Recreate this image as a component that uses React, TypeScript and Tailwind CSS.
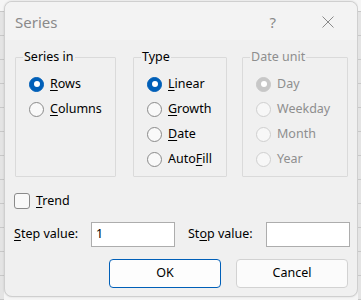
import React from 'react';

const font = "font-['Segoe_UI','Noto_Sans','Open_Sans',sans-serif]";

function Radio({ label, u, checked = false, disabled = false }: { label: string; u: number; checked?: boolean; disabled?: boolean }) {
  const circle = disabled
    ? checked
      ? 'bg-[#c7c7c7] border-[#c7c7c7]'
      : 'bg-[#f7f7f7] border-[#cfcfcf]'
    : checked
      ? 'bg-[#005fb8] border-[#005fb8]'
      : 'bg-[#f9f9f9] border-[#8a8a8a]';
  return (
    <div className="flex items-center h-[25px]">
      <span className={`w-[15px] h-[15px] rounded-full border flex items-center justify-center ${circle}`}>
        {checked && <span className="w-[6px] h-[6px] rounded-full bg-white" />}
      </span>
      <span className={`ml-[6px] ${disabled ? 'text-[#8e8e8e]' : 'text-black'}`}>
        {disabled ? (
          label
        ) : (
          <>
            {label.slice(0, u)}
            <span className="underline underline-offset-2">{label[u]}</span>
            {label.slice(u + 1)}
          </>
        )}
      </span>
    </div>
  );
}

function Group({ title, width, disabled = false, children }: { title: string; width: string; disabled?: boolean; children: React.ReactNode }) {
  return (
    <fieldset className={`${width} h-[129px] border border-[#dadada] rounded-[1px] pl-[13px] pt-[5px]`}>
      <legend className={`ml-[-6px] px-[1px] ${disabled ? 'text-[#8e8e8e]' : 'text-black'}`}>{title}</legend>
      {children}
    </fieldset>
  );
}

function GridStrip({ width }: { width: string }) {
  const rows = [25, 24, 24, 24, 24, 24, 24, 24, 24, 24, 24, 24];
  return (
    <div className={`${width} flex flex-col bg-[#e4e4e4]`}>
      <div className="h-[24px] bg-[#f5f5f5] border-b border-[#c8c8c8]" />
      {rows.map((h, i) => (
        <div key={i} className="h-[24px] shrink-0 border-b border-[#c8c8c8]" />
      ))}
    </div>
  );
}

export default function App() {
  return (
    <div className={`w-[361px] h-[300px] flex overflow-hidden bg-[#f5f5f5] text-[12.5px] ${font}`}>
      <GridStrip width="w-[4px]" />
      <div className="w-[354px] h-[296px] mt-[1px] flex flex-col bg-[#f0f0f0] border border-[#cfcfcf] rounded-[8px] shadow-[0_0_2px_rgba(0,0,0,0.15)] overflow-hidden">
        <div className="h-[38px] shrink-0 flex items-center bg-[#f3f3f3] pl-[10px]">
          <span className="text-[15px] text-[#8a8a8a] mt-[2px]">Series</span>
          <span className="ml-auto mr-[46px] text-[15px] text-[#8a8a8a] mt-[2px]">?</span>
          <svg width="12" height="12" viewBox="0 0 12 12" className="mr-[23px] mt-[2px]">
            <path d="M0.5 0.5 L11.5 11.5 M11.5 0.5 L0.5 11.5" stroke="#8a8a8a" strokeWidth="1" />
          </svg>
        </div>
        <div className="flex pl-[10px] pt-[8px]">
          <Group title="Series in" width="w-[101px]">
            <Radio label="Rows" u={0} checked />
            <Radio label="Columns" u={0} />
          </Group>
          <div className="ml-[17px]">
            <Group title="Type" width="w-[94px]">
              <Radio label="Linear" u={0} checked />
              <Radio label="Growth" u={0} />
              <Radio label="Date" u={0} />
              <Radio label="AutoFill" u={4} />
            </Group>
          </div>
          <div className="ml-[15px]">
            <Group title="Date unit" width="w-[106px]" disabled>
              <Radio label="Day" u={0} checked disabled />
              <Radio label="Weekday" u={0} disabled />
              <Radio label="Month" u={0} disabled />
              <Radio label="Year" u={0} disabled />
            </Group>
          </div>
        </div>
        <div className="flex items-center pl-[9px] mt-[16px] h-[16px]">
          <span className="w-[16px] h-[16px] rounded-[3px] border border-[#8a8a8a] bg-[#f9f9f9]" />
          <span className="ml-[6px]">
            <span className="underline underline-offset-2">T</span>rend
          </span>
        </div>
        <div className="flex items-center pl-[9px] mt-[13px] h-[25px]">
          <span className="w-[77px]">
            <span className="underline underline-offset-2">S</span>tep value:
          </span>
          <div className="w-[84px] h-[25px] bg-white border border-[#adadad] pl-[4px] flex items-center">1</div>
          <span className="ml-[13px] w-[78px]">
            St<span className="underline underline-offset-2">o</span>p value:
          </span>
          <div className="w-[84px] h-[25px] bg-white border border-[#adadad]" />
        </div>
        <div className="flex justify-end pr-[9px] mt-[12px] gap-[15px]">
          <button className="w-[112px] h-[29px] rounded-[4px] border border-[#005fb8] bg-[#fdfdfd] text-black">OK</button>
          <button className="w-[112px] h-[29px] rounded-[4px] border border-[#d2d2d2] bg-[#fbfbfb] text-black">Cancel</button>
        </div>
      </div>
      <GridStrip width="w-[3px]" />
    </div>
  );
}
